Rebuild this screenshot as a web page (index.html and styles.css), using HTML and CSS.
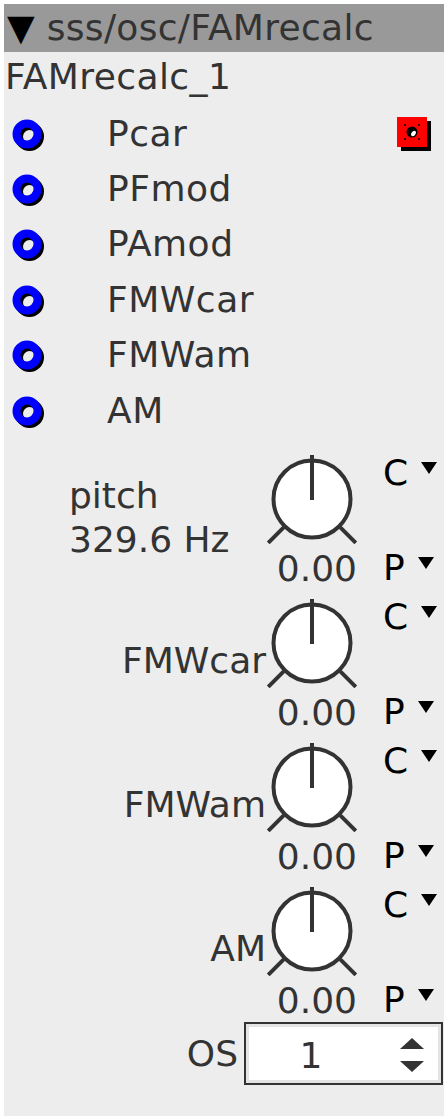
FILE: index.html
```html
<!DOCTYPE html>
<html>
<head>
<meta charset="utf-8">
<link rel="stylesheet" href="styles.css">
</head>
<body>
<div class="panel">
  <div class="header"><span class="htri">▼</span> sss/osc/FAMrecalc</div>
  <div class="name">FAMrecalc_1</div>
  <div class="ports">
    <div class="port">
      <svg class="ring" width="36" height="36" viewBox="0 0 36 36"><circle cx="20.5" cy="20.5" r="10.5" fill="none" stroke="#000" stroke-width="8"/><circle cx="18" cy="18" r="10.5" fill="none" stroke="#0000ff" stroke-width="8"/></svg>
      <span class="plabel">Pcar</span>
      <svg class="outlet" width="36" height="36" viewBox="0 0 36 36"><rect x="6" y="6" width="30" height="30" fill="#000"/><rect x="2" y="2" width="30" height="30" fill="#ff0000"/><circle cx="17" cy="17" r="5.5" fill="#000"/><ellipse cx="18.5" cy="18.5" rx="2" ry="3" transform="rotate(35 18.5 18.5)" fill="#fff"/><rect x="9" y="9" width="2" height="2" fill="#400"/><rect x="23" y="9" width="2" height="2" fill="#400"/><rect x="9" y="23" width="2" height="2" fill="#400"/><rect x="23" y="23" width="2" height="2" fill="#400"/></svg>
    </div>
    <div class="port">
      <svg class="ring" width="36" height="36" viewBox="0 0 36 36"><circle cx="20.5" cy="20.5" r="10.5" fill="none" stroke="#000" stroke-width="8"/><circle cx="18" cy="18" r="10.5" fill="none" stroke="#0000ff" stroke-width="8"/></svg>
      <span class="plabel">PFmod</span>
    </div>
    <div class="port">
      <svg class="ring" width="36" height="36" viewBox="0 0 36 36"><circle cx="20.5" cy="20.5" r="10.5" fill="none" stroke="#000" stroke-width="8"/><circle cx="18" cy="18" r="10.5" fill="none" stroke="#0000ff" stroke-width="8"/></svg>
      <span class="plabel">PAmod</span>
    </div>
    <div class="port">
      <svg class="ring" width="36" height="36" viewBox="0 0 36 36"><circle cx="20.5" cy="20.5" r="10.5" fill="none" stroke="#000" stroke-width="8"/><circle cx="18" cy="18" r="10.5" fill="none" stroke="#0000ff" stroke-width="8"/></svg>
      <span class="plabel">FMWcar</span>
    </div>
    <div class="port">
      <svg class="ring" width="36" height="36" viewBox="0 0 36 36"><circle cx="20.5" cy="20.5" r="10.5" fill="none" stroke="#000" stroke-width="8"/><circle cx="18" cy="18" r="10.5" fill="none" stroke="#0000ff" stroke-width="8"/></svg>
      <span class="plabel">FMWam</span>
    </div>
    <div class="port">
      <svg class="ring" width="36" height="36" viewBox="0 0 36 36"><circle cx="20.5" cy="20.5" r="10.5" fill="none" stroke="#000" stroke-width="8"/><circle cx="18" cy="18" r="10.5" fill="none" stroke="#0000ff" stroke-width="8"/></svg>
      <span class="plabel">AM</span>
    </div>
  </div>

  <div class="knobs">
    <div class="krow">
      <div class="klabel pitch">pitch<br>329.6 Hz</div>
      <div class="kcol">
        <svg class="knob" width="96" height="96" viewBox="0 0 96 96"><circle cx="48" cy="48" r="38.5" fill="#fff" stroke="#333" stroke-width="4"/><line x1="48" y1="4" x2="48" y2="49" stroke="#333" stroke-width="4"/><line x1="19.7" y1="76.3" x2="4.2" y2="91.8" stroke="#333" stroke-width="4"/><line x1="76.3" y1="76.3" x2="91.8" y2="91.8" stroke="#333" stroke-width="4"/></svg>
        <div class="val">0.00</div>
      </div>
      <div class="cp"><div>C<i class="dd"></i></div><div>P<i class="dd"></i></div></div>
    </div>
    <div class="krow">
      <div class="klabel">FMWcar</div>
      <div class="kcol">
        <svg class="knob" width="96" height="96" viewBox="0 0 96 96"><circle cx="48" cy="48" r="38.5" fill="#fff" stroke="#333" stroke-width="4"/><line x1="48" y1="4" x2="48" y2="49" stroke="#333" stroke-width="4"/><line x1="19.7" y1="76.3" x2="4.2" y2="91.8" stroke="#333" stroke-width="4"/><line x1="76.3" y1="76.3" x2="91.8" y2="91.8" stroke="#333" stroke-width="4"/></svg>
        <div class="val">0.00</div>
      </div>
      <div class="cp"><div>C<i class="dd"></i></div><div>P<i class="dd"></i></div></div>
    </div>
    <div class="krow">
      <div class="klabel">FMWam</div>
      <div class="kcol">
        <svg class="knob" width="96" height="96" viewBox="0 0 96 96"><circle cx="48" cy="48" r="38.5" fill="#fff" stroke="#333" stroke-width="4"/><line x1="48" y1="4" x2="48" y2="49" stroke="#333" stroke-width="4"/><line x1="19.7" y1="76.3" x2="4.2" y2="91.8" stroke="#333" stroke-width="4"/><line x1="76.3" y1="76.3" x2="91.8" y2="91.8" stroke="#333" stroke-width="4"/></svg>
        <div class="val">0.00</div>
      </div>
      <div class="cp"><div>C<i class="dd"></i></div><div>P<i class="dd"></i></div></div>
    </div>
    <div class="krow">
      <div class="klabel">AM</div>
      <div class="kcol">
        <svg class="knob" width="96" height="96" viewBox="0 0 96 96"><circle cx="48" cy="48" r="38.5" fill="#fff" stroke="#333" stroke-width="4"/><line x1="48" y1="4" x2="48" y2="49" stroke="#333" stroke-width="4"/><line x1="19.7" y1="76.3" x2="4.2" y2="91.8" stroke="#333" stroke-width="4"/><line x1="76.3" y1="76.3" x2="91.8" y2="91.8" stroke="#333" stroke-width="4"/></svg>
        <div class="val">0.00</div>
      </div>
      <div class="cp"><div>C<i class="dd"></i></div><div>P<i class="dd"></i></div></div>
    </div>
  </div>

  <div class="osrow">
    <span class="oslabel">OS</span>
    <div class="spin">
      <span class="sv">1</span>
      <span class="arrows"><i class="up"></i><i class="down"></i></span>
    </div>
  </div>
</div>
</body>
</html>
```

FILE: styles.css
```css
html, body {
  margin: 0;
  padding: 0;
  background: #ffffff;
}
body {
  padding: 4px;
  font-family: "DejaVu Sans", sans-serif;
  font-size: 36px;
  color: #333333;
}
.panel {
  width: 440px;
  height: 1112px;
  background: #ededed;
  display: flex;
  flex-direction: column;
  overflow: hidden;
}
.header {
  height: 48px;
  line-height: 48px;
  padding-left: 3px;
  background: #999999;
  color: #333333;
  letter-spacing: 0.3px;
  white-space: nowrap;
  overflow: hidden;
}
.htri {
  color: #000000;
}
.name {
  height: 50px;
  line-height: 49px;
  padding-left: 1px;
  letter-spacing: 0.4px;
  white-space: nowrap;
}
.ports {
  margin-top: 4px;
  display: flex;
  flex-direction: column;
}
.port {
  height: 55.4px;
  display: flex;
  align-items: center;
}
.ring {
  display: block;
  margin-left: 5px;
  flex: none;
}
.plabel {
  margin-left: 62px;
  line-height: 40px;
  letter-spacing: 0.5px;
}
.outlet {
  display: block;
  margin-left: auto;
  margin-right: 13px;
  margin-top: -2px;
}
.knobs {
  margin-top: 13px;
  display: flex;
  flex-direction: column;
  gap: 5px;
}
.krow {
  height: 139px;
  display: flex;
}
.klabel {
  flex: 1;
  display: flex;
  align-items: center;
  justify-content: flex-end;
  text-align: right;
  line-height: 44px;
  white-space: nowrap;
  margin-right: -2px;
  padding-bottom: 8px;
  box-sizing: border-box;
}
.klabel.pitch {
  justify-content: flex-start;
  text-align: left;
  padding-left: 65px;
  padding-bottom: 6px;
}
.kcol {
  width: 96px;
  flex: none;
  display: flex;
  flex-direction: column;
}
.knob {
  display: block;
}
.val {
  line-height: 43px;
  text-align: right;
  padding-right: 1px;
  margin-right: 2px;
  white-space: nowrap;
}
.cp {
  width: 61px;
  margin-left: 23px;
  flex: none;
  display: flex;
  flex-direction: column;
  justify-content: space-between;
  color: #000000;
  line-height: 44px;
  white-space: nowrap;
}
.dd {
  display: inline-block;
  width: 0;
  height: 0;
  border-left: 8px solid transparent;
  border-right: 8px solid transparent;
  border-top: 12px solid #000000;
  margin-left: 13px;
  vertical-align: 11px;
}
.osrow {
  height: 63px;
  display: flex;
  justify-content: flex-end;
  align-items: center;
  gap: 6px;
}
.oslabel {
  line-height: 44px;
}
.spin {
  width: 199px;
  height: 63px;
  box-sizing: border-box;
  border: 2px solid #333333;
  box-shadow: inset 0 0 0 3px #e4e4e4;
  background: #ffffff;
  margin-right: 1px;
  display: flex;
  align-items: center;
}
.sv {
  width: 130px;
  text-align: center;
  line-height: 44px;
  padding-top: 4px;
}
.arrows {
  flex: 1;
  display: flex;
  flex-direction: column;
  align-items: center;
  gap: 12px;
  padding-top: 2px;
  padding-left: 6px;
}
.up {
  display: block;
  width: 0;
  height: 0;
  border-left: 12px solid transparent;
  border-right: 12px solid transparent;
  border-bottom: 11px solid #333333;
}
.down {
  display: block;
  width: 0;
  height: 0;
  border-left: 12px solid transparent;
  border-right: 12px solid transparent;
  border-top: 11px solid #333333;
}
```
